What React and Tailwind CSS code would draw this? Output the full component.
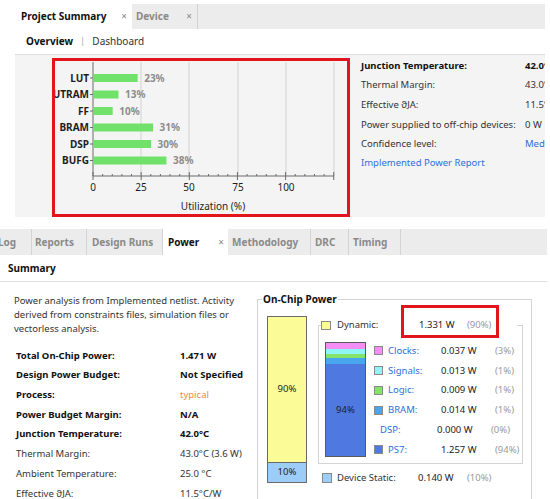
import React from "react";

const bars = [
  ["LUT", 23, 78],
  ["UTRAM", 13, 94.5],
  ["FF", 10, 111],
  ["BRAM", 31, 127.5],
  ["DSP", 30, 144],
  ["BUFG", 38, 160.5],
];

function Chart() {
  const minor = [];
  for (let i = 0; i <= 25; i++) minor.push(93 + i * 9.63);
  return (
    <svg width="292" height="153" viewBox="55 61 292 153" className="block">
      {[141, 189, 238, 286, 334].map((x) => (
        <line key={x} x1={x} x2={x} y1={62} y2={176} stroke="#d2d2d2" strokeWidth="1" />
      ))}
      <line x1={93} x2={93} y1={62} y2={176} stroke="#6a6a6a" strokeWidth="1" />
      <line x1={93} x2={334} y1={176} y2={176} stroke="#6a6a6a" strokeWidth="1" />
      {minor.map((x, i) => (
        <line key={i} x1={x} x2={x} y1={i % 5 === 0 ? 172 : 174} y2={i % 5 === 0 ? 180 : 176} stroke="#6a6a6a" strokeWidth="1" />
      ))}
      {bars.map(([name, pct, y]) => (
        <g key={name}>
          <line x1={90} x2={93} y1={y} y2={y} stroke="#6a6a6a" strokeWidth="1" />
          <rect x={93.5} y={y - 4} width={pct * 1.92} height={8} fill="#70e26a" />
          <text x={89} y={y + 3.5} textAnchor="end" fontSize="10" fontWeight="700" fill="#1e1e1e">{name}</text>
          <text x={93 + pct * 1.92 + 7} y={y + 3.5} fontSize="10" fontWeight="700" fill="#8c8c8c">{pct}%</text>
        </g>
      ))}
      {[[93, "0"], [141, "25"], [189, "50"], [238, "75"], [286, "100"]].map(([x, t]) => (
        <text key={t} x={x} y={191} textAnchor="middle" fontSize="10" fill="#1e1e1e">{t}</text>
      ))}
      <text x={213} y={210} textAnchor="middle" fontSize="10" fill="#1e1e1e">Utilization (%)</text>
    </svg>
  );
}

function TopRow({ label, value, bold, link }) {
  return (
    <div className="h-[19.7px] flex items-center whitespace-nowrap">
      <span className={`w-[164px] shrink-0 ${bold ? "font-bold text-[#111]" : "text-[#333]"}`}>{label}</span>
      <span className={link ? "text-[#2d6fdc]" : bold ? "font-bold text-[#111]" : "text-[#333]"}>{value}</span>
    </div>
  );
}

function BottomRow({ label, value, bold, vbold, orange }) {
  return (
    <div className="h-[19.7px] flex items-center whitespace-nowrap">
      <span className={`w-[164px] shrink-0 ${bold ? "font-bold text-[#111]" : "text-[#333]"}`}>{label}</span>
      <span className={orange ? "text-[#f08a3c]" : vbold ? "font-bold text-[#111]" : "text-[#333]"}>{value}</span>
    </div>
  );
}

function Legend({ color, label, value, pct, noSquare }) {
  return (
    <div className="h-[19.8px] flex items-center whitespace-nowrap">
      {noSquare ? (
        <span className="w-[10px]" />
      ) : (
        <span className="w-[9px] h-[9px] border border-[#8a8a8a] mr-[5px]" style={{ background: color }} />
      )}
      <span className={`${noSquare ? "-ml-[4px] w-[57px]" : "w-[53px]"} text-[#2d6fdc]`}>{label}</span>
      <span className="w-[54px] text-[#222]">{value}</span>
      <span className="text-[#999]">{pct}</span>
    </div>
  );
}

export default function App() {
  return (
    <div className="w-[550px] h-[499px] overflow-hidden bg-white font-['Noto_Sans',sans-serif] text-[9.5px] text-[#1e1e1e]">
      {/* Top: Project Summary */}
      <div className="pt-[4px] pl-[15px] w-[545px]">
        <div className="h-[25px] bg-[#ececec] flex">
          <div className="w-[117px] bg-white flex items-center justify-between pl-[6px] pr-[5px]">
            <span className="font-bold text-[10px] text-[#111]">Project Summary</span>
            <span className="text-[#8a8a8a] text-[10px]">×</span>
          </div>
          <div className="w-[66px] flex items-center justify-between pl-[4px] pr-[5px] border-r border-[#d2d2d2]">
            <span className="font-bold text-[10px] text-[#8a8a8a]">Device</span>
            <span className="text-[#8a8a8a] text-[10px]">×</span>
          </div>
        </div>
        <div className="h-[26px] flex items-center pl-[11px] border-b border-[#dcdcdc]">
          <span className="font-bold text-[10px] text-[#111]">Overview</span>
          <span className="mx-[7px] text-[#aaa]">|</span>
          <span className="text-[10px] text-[#333]">Dashboard</span>
        </div>
        <div className="h-[162px] bg-[#f4f4f4] flex">
          <div className="ml-[37px] mt-[3px] w-[298px] h-[159px] border-[3px] border-[#e3151c] shrink-0">
            <Chart />
          </div>
          <div className="pl-[11px] pt-[1px] overflow-hidden flex-1">
            <TopRow label="Junction Temperature:" value="42.0°C" bold />
            <TopRow label="Thermal Margin:" value="43.0°C (3.6 W)" />
            <TopRow label="Effective ϑJA:" value="11.5°C/W" />
            <TopRow label="Power supplied to off-chip devices:" value="0 W" />
            <TopRow label="Confidence level:" value="Medium" link />
            <div className="h-[18px] flex items-center text-[#2d6fdc] whitespace-nowrap">Implemented Power Report</div>
          </div>
        </div>
      </div>

      {/* Bottom: Power */}
      <div className="mt-[12px] w-[547px]">
        <div className="h-[26px] bg-[#ececec] flex font-bold text-[10px] text-[#8a8a8a] whitespace-nowrap">
          <div className="w-[32px] flex items-center border-r border-[#d4d4d4] overflow-hidden"><span className="-ml-[2px]">Log</span></div>
          <div className="w-[55px] flex items-center pl-[3px] border-r border-[#d4d4d4]">Reports</div>
          <div className="w-[76px] flex items-center pl-[5px] border-r border-[#d4d4d4]">Design Runs</div>
          <div className="w-[65px] flex items-center justify-between pl-[5px] pr-[4px] bg-white">
            <span className="text-[#111]">Power</span>
            <span className="font-normal text-[#8a8a8a]">×</span>
          </div>
          <div className="w-[83px] flex items-center pl-[4px] border-r border-[#d4d4d4]">Methodology</div>
          <div className="w-[38px] flex items-center pl-[4px] border-r border-[#d4d4d4]">DRC</div>
          <div className="w-[52px] flex items-center pl-[4px] border-r border-[#d4d4d4]">Timing</div>
        </div>
        <div className="h-[27px] flex items-center pl-[8px] border-b border-[#e0e0e0] font-bold text-[10px] text-[#111]">Summary</div>
        <div className="flex">
          <div className="w-[257px] shrink-0 pt-[12px]">
            <p className="pl-[14px] leading-[14px] text-[#333]">
              Power analysis from Implemented netlist. Activity<br />
              derived from constraints files, simulation files or<br />
              vectorless analysis.
            </p>
            <div className="mt-[10px] pl-[16px]">
              <BottomRow label="Total On-Chip Power:" value="1.471 W" bold vbold />
              <BottomRow label="Design Power Budget:" value="Not Specified" bold vbold />
              <BottomRow label="Process:" value="typical" bold orange />
              <BottomRow label="Power Budget Margin:" value="N/A" bold vbold />
              <BottomRow label="Junction Temperature:" value="42.0°C" bold vbold />
              <BottomRow label="Thermal Margin:" value="43.0°C (3.6 W)" />
              <BottomRow label="Ambient Temperature:" value="25.0 °C" />
              <BottomRow label="Effective ϑJA:" value="11.5°C/W" />
            </div>
          </div>
          <div className="w-[275px] shrink-0 mt-[10px]">
            <fieldset className="border border-[#d4d4d4] h-[215px] relative">
              <legend className="ml-[4px] px-[1px] font-bold text-[10px] leading-[14px] text-[#111]">On-Chip Power</legend>
              <div className="flex pt-[10px] pl-[9px]">
                <div className="w-[40px] h-[167px] border border-[#6a6a6a] flex flex-col shrink-0">
                  <div className="flex-1 bg-[#fbfb98] flex items-center justify-center">90%</div>
                  <div className="h-[20px] bg-[#9ccdf9] border-t border-[#6a6a6a] flex items-center justify-center">10%</div>
                </div>
                <div className="ml-[11px] w-[205px]">
                  <fieldset className="border border-[#d4d4d4] h-[147px] mt-[1px]">
                    <legend className="ml-[2px] pr-[26px] h-[16px] flex items-center whitespace-nowrap">
                      <span className="w-[10px] h-[9px] border border-[#8a8a8a] bg-[#fbfb98] mr-[6px]" />
                      <span className="w-[82px] text-[#333]">Dynamic:</span>
                      <span className="w-[48px] text-[#222]">1.331 W</span>
                      <span className="text-[#999]">(90%)</span>
                    </legend>
                    <div className="flex pl-[6px]">
                      <div className="w-[41px] h-[115px] mt-[9px] border border-[#5a5a5a] flex flex-col shrink-0">
                        <div className="h-[6px] bg-[#f48ef4]" />
                        <div className="h-[5px] bg-[#8ef4f4]" />
                        <div className="h-[4px] bg-[#86e36a]" />
                        <div className="h-[6px] bg-[#47a6ee]" />
                        <div className="flex-1 bg-[#5078e1] flex items-center justify-center text-[#1e1e1e]">94%</div>
                      </div>
                      <div className="ml-[8px] pt-[8px]">
                        <Legend color="#f48ef4" label="Clocks:" value="0.037 W" pct="(3%)" />
                        <Legend color="#8ef4f4" label="Signals:" value="0.013 W" pct="(1%)" />
                        <Legend color="#86e36a" label="Logic:" value="0.009 W" pct="(1%)" />
                        <Legend color="#47a6ee" label="BRAM:" value="0.014 W" pct="(1%)" />
                        <Legend label="DSP:" value="0.000 W" pct="(0%)" noSquare />
                        <Legend color="#5078e1" label="PS7:" value="1.257 W" pct="(94%)" />
                      </div>
                    </div>
                  </fieldset>
                  <div className="h-[20px] mt-[4px] flex items-center pl-[4px] whitespace-nowrap">
                    <span className="w-[10px] h-[10px] border border-[#8a8a8a] bg-[#9ccdf9] mr-[5px]" />
                    <span className="w-[81px] text-[#333]">Device Static:</span>
                    <span className="w-[49px] text-[#222]">0.140 W</span>
                    <span className="text-[#999]">(10%)</span>
                  </div>
                </div>
              </div>
              <div className="absolute left-[143px] top-[-1px] w-[98px] h-[33px] border-[3px] border-[#e3151c]" />
            </fieldset>
          </div>
        </div>
      </div>
    </div>
  );
}
